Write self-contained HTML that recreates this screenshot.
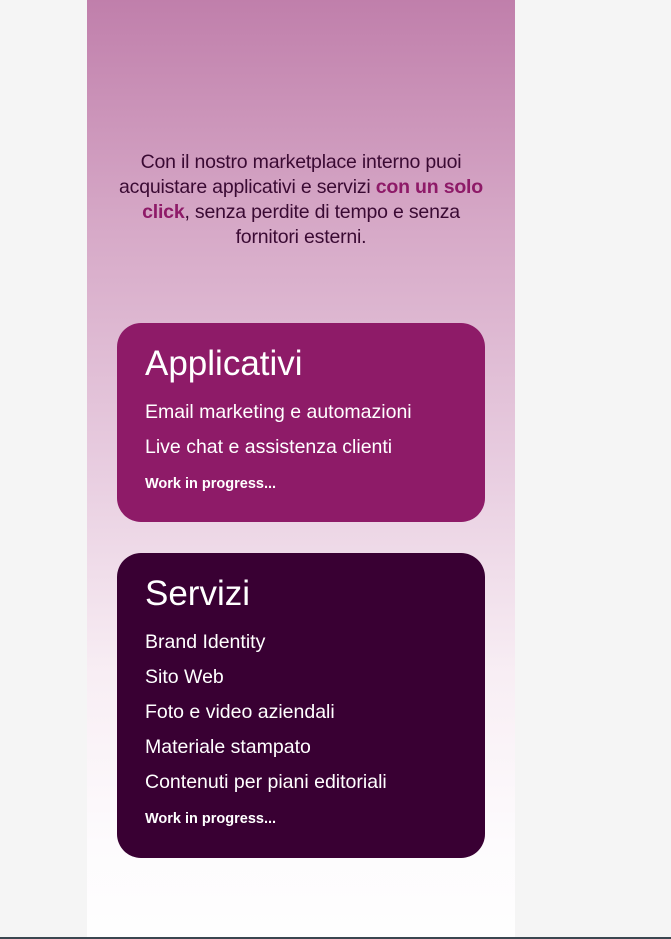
<!DOCTYPE html>
<html><head><style>
html,body{margin:0;padding:0;}
body{width:671px;height:939px;background:#f5f5f5;position:relative;overflow:hidden;font-family:"Liberation Sans",sans-serif;}
.col{position:absolute;left:87px;top:0;width:428px;height:937px;background:linear-gradient(180deg,#c07fab 0%,#d7aac8 25%,#e8cde0 50%,#f8eef4 72%,#fdfbfd 90%,#fefefe 100%);}
.bar{position:absolute;left:0;top:937px;width:671px;height:2px;background:#3a4750;}
.intro{position:absolute;left:112px;top:150px;width:378px;text-align:center;font-size:19.5px;line-height:25px;color:#3a0a33;letter-spacing:-0.2px;}
.intro b{color:#8e1a68;}
.card{position:absolute;left:117px;width:368px;border-radius:24px;color:#fff;box-sizing:border-box;padding-left:28px;}
.c1{top:323px;height:199px;background:#8e1b68;}
.c2{top:553px;height:305px;background:#390033;}
h2{margin:0;font-weight:normal;font-size:35px;line-height:40px;padding-top:21px;margin-bottom:11px;}
.it{font-size:19.5px;line-height:35px;font-weight:300;}
.wip{font-size:14.5px;font-weight:bold;margin-top:9px;line-height:20px;}
</style></head><body>
<div class="col"></div>
<div class="intro">Con il nostro marketplace interno puoi acquistare applicativi e servizi <b>con un solo click</b>, senza perdite di tempo e senza fornitori esterni.</div>
<div class="card c1"><h2>Applicativi</h2>
<div class="it">Email marketing e automazioni</div>
<div class="it">Live chat e assistenza clienti</div>
<div class="wip">Work in progress...</div></div>
<div class="card c2"><h2>Servizi</h2>
<div class="it">Brand Identity</div>
<div class="it">Sito Web</div>
<div class="it">Foto e video aziendali</div>
<div class="it">Materiale stampato</div>
<div class="it">Contenuti per piani editoriali</div>
<div class="wip">Work in progress...</div></div>
<div class="bar"></div>
</body></html>
